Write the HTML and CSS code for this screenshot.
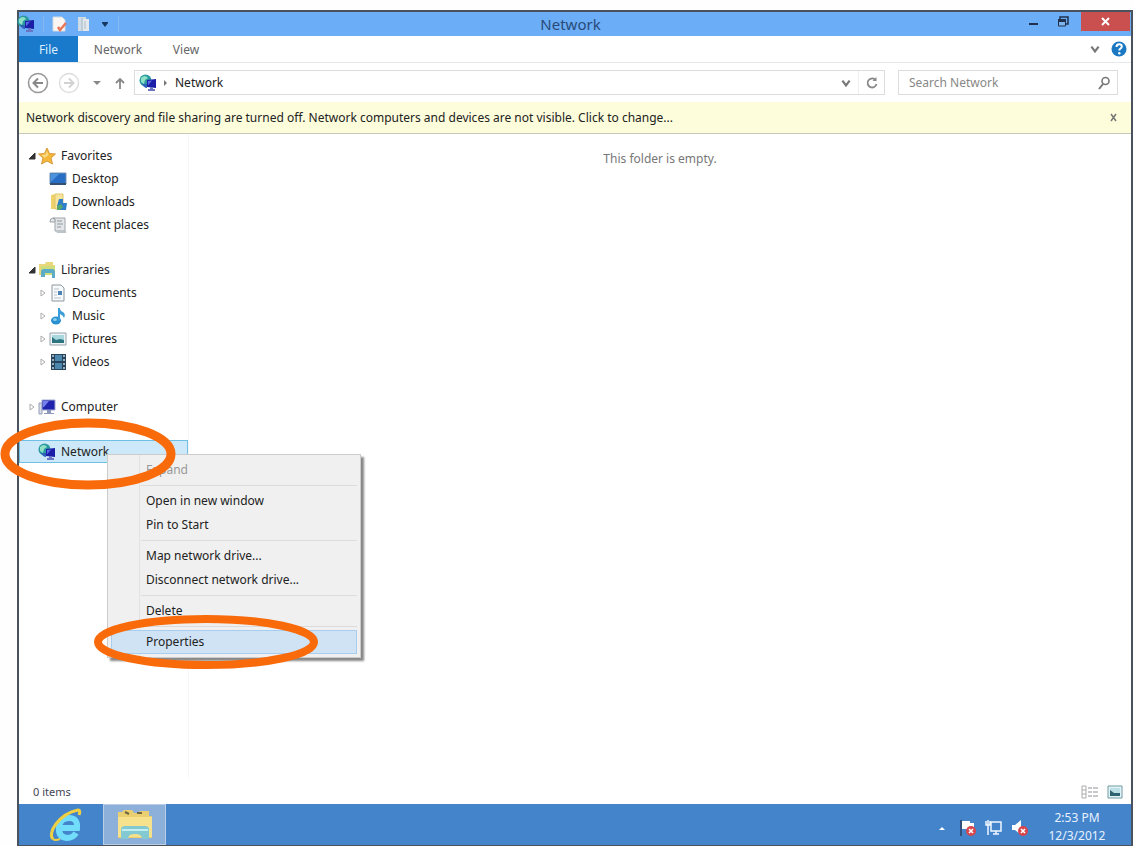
FILE: index.html
```html
<!DOCTYPE html>
<html lang="en">
<head>
<meta charset="utf-8">
<title>Network</title>
<link rel="stylesheet" href="styles.css">
</head>
<body>
<svg class="defs" width="0" height="0" aria-hidden="true">
  <symbol id="net" viewBox="0 0 18 18">
    <circle cx="6.500" cy="6.500" r="6" fill="#2a9aa0"/>
    <path d="M2 4q4-4 7 0l-3 2-1 4-3-2z" fill="#8fe0c4"/>
    <path d="M3 10q2 4 5 4v-4z" fill="#2d64b8"/>
    <path d="M8 6l9-1v9l-9-1z" fill="#1b1fa8"/>
    <path d="M9 7l4-.5-4 5z" fill="#5a68e4"/>
    <path d="M11 13h3v2h2v2H9v-2h2z" fill="#6a76c4"/>
  </symbol>
  <symbol id="open" viewBox="0 0 8 8"><path d="M7 1v6H1z" fill="#333" stroke="#333"/></symbol>
  <symbol id="shut" viewBox="0 0 8 8"><path d="M2 1l4 3-4 3z" fill="#fff" stroke="#aaa"/></symbol>
  <symbol id="chev" viewBox="0 0 10 10"><path d="M2 3l3 4 3-4" fill="none" stroke="#777" stroke-width="1.800"/></symbol>
</svg>

<div class="screen">
  <header class="titlebar">
    <div class="quick">
      <svg width="18" height="18"><use href="#net"/></svg>
      <span class="rule"></span>
      <button aria-label="Properties"><svg width="16" height="18" viewBox="0 0 16 18"><path d="M1 2h9l3 3v11H1z" fill="#fbf6f2" stroke="#d6d9e2"/><path d="M6 12l2 3 6-7" fill="none" stroke="#e8745a" stroke-width="2.500"/></svg></button>
      <button aria-label="New folder"><svg width="16" height="18" viewBox="0 0 16 18"><path d="M2 2h8v14H2z" fill="#cfdbe6"/><path d="M7 4h6v12H7z" fill="#e4e8ea"/><path d="M6 3v13M9 6v8" stroke="#a9bccd"/></svg></button>
      <button aria-label="Customize"><svg width="10" height="10" viewBox="0 0 10 10"><path d="M2 3h6v1l-3 4-3-4z" fill="#17365f"/></svg></button>
      <span class="rule"></span>
    </div>
    <h1>Network</h1>
    <div class="controls">
      <button aria-label="Minimize"><svg width="12" height="12" viewBox="0 0 12 12"><path d="M1 7h9v2H1z" fill="#20304d"/></svg></button>
      <button aria-label="Restore"><svg width="12" height="12" viewBox="0 0 12 12"><path d="M3 3V1h8v7H9" fill="none" stroke="#20304d" stroke-width="1.500"/><path d="M1.500 4h7v6h-7z" fill="#7fb3ee" stroke="#20304d"/><path d="M1 3h8v3H1z" fill="#20304d"/></svg></button>
      <button class="close" aria-label="Close"><svg width="12" height="12" viewBox="0 0 12 12"><path d="M2 2l7 7M9 2L2 9" stroke="#fff" stroke-width="2"/></svg></button>
    </div>
  </header>

  <nav class="tabs">
    <button class="file">File</button>
    <button class="tab-network">Network</button>
    <button class="tab-view">View</button>
    <span class="spacer"></span>
    <button class="icon" aria-label="Expand ribbon"><svg width="12" height="12"><use href="#chev"/></svg></button>
    <button class="icon help" aria-label="Help"><svg width="16" height="16" viewBox="0 0 16 16"><circle cx="8" cy="8" r="7.500" fill="#1b78c2"/><path d="M5.500 6q0-2.700 2.700-2.700 2.600 0 2.600 2.200 0 1.500-1.700 2.300-.8.400-.8 1.700" fill="none" stroke="#fff" stroke-width="2"/><circle cx="8.300" cy="12.200" r="1.200" fill="#fff"/></svg></button>
  </nav>

  <div class="address-row">
    <div class="arrows">
      <button aria-label="Back"><svg width="22" height="22" viewBox="0 0 22 22"><circle cx="11" cy="11" r="9.500" fill="#fff" stroke="#999" stroke-width="1.600"/><path d="M16 11H7M11 6.500L6.500 11l4.500 4.500" fill="none" stroke="#888" stroke-width="2"/></svg></button>
      <button aria-label="Forward"><svg width="22" height="22" viewBox="0 0 22 22"><circle cx="11" cy="11" r="9.500" fill="#fff" stroke="#ddd" stroke-width="1.400"/><path d="M6 11h9M11 6.500l4.500 4.500-4.500 4.500" fill="none" stroke="#d2d2d2" stroke-width="2"/></svg></button>
      <button class="recent" aria-label="Recent locations"><svg width="10" height="10" viewBox="0 0 10 10"><path d="M1 3h8L5 7z" fill="#888"/></svg></button>
      <button aria-label="Up"><svg width="12" height="14" viewBox="0 0 12 14"><path d="M6 13V3M2 7l4-4 4 4" fill="none" stroke="#888" stroke-width="1.800"/></svg></button>
    </div>
    <div class="address">
      <svg width="18" height="18"><use href="#net"/></svg>
      <svg width="6" height="8" viewBox="0 0 6 8"><path d="M1 1l3 3-3 3z" fill="#777"/></svg>
      <a href="#network">Network</a>
      <span class="spacer"></span>
      <button aria-label="Previous locations"><svg width="12" height="12"><use href="#chev"/></svg></button>
      <button class="refresh" aria-label="Refresh"><svg width="14" height="14" viewBox="0 0 14 14"><path d="M10 3.500A4.500 4.500 0 1 0 11.500 8" fill="none" stroke="#888" stroke-width="1.800"/><path d="M7.500 5h4V1z" fill="#888"/></svg></button>
    </div>
    <div class="search">
      <input type="search" placeholder="Search Network" aria-label="Search Network">
      <button aria-label="Search"><svg width="14" height="14" viewBox="0 0 14 14"><circle cx="8.500" cy="5" r="3.500" fill="none" stroke="#777" stroke-width="1.600"/><path d="M6 8l-4 5" stroke="#777" stroke-width="2"/></svg></button>
    </div>
  </div>

  <div class="notice">
    <a href="#change">Network discovery and file sharing are turned off. Network computers and devices are not visible. Click to change...</a>
    <button aria-label="Dismiss"><svg width="10" height="10" viewBox="0 0 10 10"><path d="M2 1l5 7M7 1L2 8" stroke="#777" stroke-width="1.500"/></svg></button>
  </div>

  <main class="panes">
    <nav class="tree">
      <div class="group">
        <a href="#favorites"><svg width="8" height="8"><use href="#open"/></svg><svg width="18" height="18" viewBox="0 0 18 18"><path d="M9 1l2.500 5.500 6 .5-4.500 4 1.500 6L9 14l-5.500 3L5 11 .5 7l6-.5z" fill="#f4b73a" stroke="#d99a3c"/><path d="M9 4l1.500 4-4 3-3-3 4-.5z" fill="#fbd985"/></svg>Favorites</a>
        <a class="child" href="#desktop"><span class="blank"></span><svg width="18" height="18" viewBox="0 0 18 18"><path d="M1 3h16v11H1z" fill="#286dc4" stroke="#7795b5"/><path d="M2 4h8l-7 7H2z" fill="#4c93df"/><path d="M1 13h16v2H1z" fill="#35506f"/></svg>Desktop</a>
        <a class="child" href="#downloads"><span class="blank"></span><svg width="18" height="18" viewBox="0 0 18 18"><path d="M2 2l5-1v15H2z" fill="#f0d26c"/><path d="M6 1h8v15H6z" fill="#f7e49c" stroke="#dfc468"/><path d="M10 6h4v4h4l-1 7H8v-4z" fill="#2d80c9"/><path d="M8 13l4-2 2 3-3 3H8z" fill="#55a76c"/></svg>Downloads</a>
        <a class="child" href="#recent"><span class="blank"></span><svg width="18" height="18" viewBox="0 0 18 18"><path d="M4 2h12v13H6V6H1q0-4 3-4z" fill="#e3e6e8" stroke="#9ea5aa"/><path d="M8 5h5M8 8h6M8 11h4M4 2q3 0 2 4" fill="none" stroke="#8d969c"/><path d="M7 15h10q1 2-1 2H8z" fill="#bcc5ca"/></svg>Recent places</a>
      </div>
      <div class="group">
        <a href="#libraries"><svg width="8" height="8"><use href="#open"/></svg><svg width="18" height="18" viewBox="0 0 18 18"><path d="M1 3h6l1-2h7v3h2v10H1z" fill="#e9d77b"/><path d="M3 5h14v9H3z" fill="#cfdc7b"/><path d="M3 16v-5q0-3 3-3h8q3 0 3 3v6h-3v-5H7v4z" fill="#5cacc7"/></svg>Libraries</a>
        <a class="child" href="#documents"><svg width="8" height="8"><use href="#shut"/></svg><svg width="18" height="18" viewBox="0 0 18 18"><path d="M3 1h9l3 3v13H3z" fill="#f8fafb" stroke="#8b979e"/><path d="M5 5h5M5 8h3M5 11h3M5 14h7" stroke="#b7c3ca"/><path d="M9 7h4v4H9z" fill="#4d83b2"/></svg>Documents</a>
        <a class="child" href="#music"><svg width="8" height="8"><use href="#shut"/></svg><svg width="18" height="18" viewBox="0 0 18 18"><ellipse cx="7" cy="13.500" rx="5" ry="4" fill="#288fd0"/><path d="M9 1h2q0 3 3 4 3 2 1 6-1-3-4-4v7H9z" fill="#3a9dda"/><ellipse cx="6" cy="12.500" rx="2" ry="1.500" fill="#8ccdf0"/></svg>Music</a>
        <a class="child" href="#pictures"><svg width="8" height="8"><use href="#shut"/></svg><svg width="18" height="18" viewBox="0 0 18 18"><path d="M1 3h16v12H1z" fill="#eef4f5" stroke="#95a1a8"/><path d="M3 5h12v8H3z" fill="#a8d8de"/><path d="M3 7l4 3 4-1 4 1v3H3z" fill="#2b7480"/></svg>Pictures</a>
        <a class="child" href="#videos"><svg width="8" height="8"><use href="#shut"/></svg><svg width="18" height="18" viewBox="0 0 18 18"><path d="M2 1h15v16H2z" fill="#27445c"/><path d="M6 2h7v6H6zM6 10h7v6H6z" fill="#4c87ad"/><path d="M4 2v15M15 2v15" stroke="#c4d3dd" stroke-width="1.500" stroke-dasharray="2 2"/></svg>Videos</a>
      </div>
      <div class="group">
        <a href="#computer"><svg width="8" height="8"><use href="#shut"/></svg><svg width="18" height="18" viewBox="0 0 18 18"><path d="M1 5h3v11H1z" fill="#d6dbe6" stroke="#969fb8"/><path d="M4 2h13v10H4z" fill="#1f22ac" stroke="#a0a8d0"/><path d="M5 3h6l-5 6H5z" fill="#7380ee"/><path d="M9 12h4v3h3v1H6v-1h3z" fill="#8d96bd"/></svg>Computer</a>
      </div>
      <div class="group">
        <a class="selected" href="#network"><span class="blank"></span><svg width="18" height="18"><use href="#net"/></svg>Network</a>
      </div>
    </nav>
    <section class="content"><p>This folder is empty.</p></section>
  </main>

  <footer class="status">
    <span>0 items</span>
    <span class="spacer"></span>
    <button aria-label="Details"><svg width="18" height="14" viewBox="0 0 18 14"><path d="M1 1h4v12H1zM1 5h4M1 9h4" fill="#fff" stroke="#aaa"/><path d="M7 3h4M12 3h5M7 7h4M12 7h5M7 11h4M12 11h5" stroke="#8e8e98"/></svg></button>
    <button aria-label="Large icons"><svg width="16" height="14" viewBox="0 0 16 14"><path d="M1 1h14v12H1z" fill="#e3f4f6" stroke="#6e9ba5"/><path d="M3 3h10v8H3z" fill="#bde0e6"/><path d="M3 5l4 3h6v3H3z" fill="#2d6470"/></svg></button>
  </footer>

  <div class="taskbar">
    <button class="ie" aria-label="Internet Explorer"><svg width="34" height="36" viewBox="0 0 34 36"><path d="M27 26q-3 5-9 5-9-1-8-11 1-9 10-9 9 0 8 10H12" fill="none" stroke="#72dcfb" stroke-width="6"/><path d="M4 32C-2 26 10 7 29 3q3 0 1 5" fill="none" stroke="#efd043" stroke-width="3"/><path d="M4 32q2 2 7 0" fill="none" stroke="#efd043" stroke-width="2"/></svg></button>
    <button class="explorer" aria-label="File Explorer"><svg width="36" height="34" viewBox="0 0 36 34"><path d="M1 8V4h4l2-2h8l2 3h4l2-2h9v5h3v22H1z" fill="#e9cf70"/><path d="M1 9h34v20H1z" fill="#f6e18d"/><path d="M8 4l4 2M20 5h5" stroke="#716640" stroke-width="2"/><path d="M4 31V22q0-4 4-4h20q4 0 4 4v9h-7q0-5-7-5t-7 5z" fill="#82c9d2"/><path d="M5 22h26" stroke="#c1eef0" stroke-width="2"/></svg></button>
    <span class="spacer"></span>
    <div class="tray">
      <button aria-label="Show hidden icons"><svg width="10" height="10" viewBox="0 0 10 10"><path d="M2 7l3-3 3 3z" fill="#fff"/></svg></button>
      <button aria-label="Action Center"><svg width="18" height="18" viewBox="0 0 18 18"><path d="M2 1v16" stroke="#283f63" stroke-width="1.500"/><path d="M3 2h8v2h4v8H8v-2H3z" fill="#fff"/><circle cx="12" cy="12" r="5" fill="#d9454c"/><path d="M10 10l4 4M14 10l-4 4" stroke="#fff" stroke-width="1.600"/></svg></button>
      <button aria-label="Network status"><svg width="18" height="18" viewBox="0 0 18 18"><path d="M6 3h10v9H6zM8 15h6M11 12v3M3 1v15M1 2v4h4V2" fill="none" stroke="#eef5ff" stroke-width="1.500"/></svg></button>
      <button aria-label="Volume muted"><svg width="18" height="18" viewBox="0 0 18 18"><path d="M1 6h3l6-5v15l-6-5H1z" fill="#fff"/><circle cx="12" cy="12" r="5" fill="#d9454c"/><path d="M10 10l4 4M14 10l-4 4" stroke="#fff" stroke-width="1.600"/></svg></button>
    </div>
    <time class="clock">2:53 PM<br>12/3/2012</time>
  </div>
</div>

<div class="menu" role="menu">
  <button role="menuitem" disabled>Expand</button>
  <hr>
  <button role="menuitem">Open in new window</button>
  <button role="menuitem">Pin to Start</button>
  <hr>
  <button role="menuitem">Map network drive...</button>
  <button role="menuitem">Disconnect network drive...</button>
  <hr>
  <button role="menuitem">Delete</button>
  <hr>
  <button role="menuitem" class="active">Properties</button>
</div>

<svg class="marks" width="330" height="260" viewBox="0 0 330 260" aria-hidden="true">
  <g fill="none" stroke="#f96a0a">
    <ellipse cx="88" cy="44" rx="83" ry="31" stroke-width="9"/>
    <ellipse cx="206" cy="232" rx="108" ry="23" stroke-width="8"/>
  </g>
</svg>
</body>
</html>
```
FILE: styles.css
```css
* { box-sizing: border-box; }

body {
  position: relative;
  margin: 0;
  height: 100vh;
  padding: 10px 1px 0 17px;
  display: flex;
  background: #fefefe;
  color: #222;
  font: 12px/16px "Noto Sans", "Open Sans", sans-serif;
}

button {
  display: flex;
  align-items: center;
  justify-content: center;
  margin: 0;
  padding: 0;
  border: 0;
  background: none;
  color: inherit;
  font: inherit;
}

a { color: inherit; text-decoration: none; }
svg { display: block; flex: none; }
.defs { position: absolute; }
.spacer { flex: 1; }

.screen {
  flex: 1;
  display: flex;
  flex-direction: column;
  border: 2px solid #4a525e;
  border-bottom-width: 1px;
  background: #fff;
}

.titlebar {
  display: grid;
  grid-template-columns: 1fr auto 1fr;
  height: 24px;
  padding-right: 1px;
  background: #6badf6;
}
.titlebar h1 {
  margin: 0;
  padding-right: 8px;
  color: #294a78;
  font-size: 15px;
  font-weight: 400;
  line-height: 24px;
}
.quick { display: flex; align-items: center; gap: 8px; }
.quick > svg { margin-left: -2px; }
.rule { width: 1px; height: 16px; background: #86b9f2; }
.controls { display: flex; justify-content: flex-end; }
.controls button { width: 29px; height: 19px; }
.controls .close { width: 49px; margin-left: 4px; background: #c9504f; }

.tabs {
  display: flex;
  height: 27px;
  padding-right: 2px;
  border-bottom: 1px solid #e6e7e9;
  color: #666;
}
.tabs button { padding-top: 2px; }
.tabs .file { width: 59px; background: #1979ca; color: #dcefff; }
.tab-network { width: 80px; }
.tab-view { width: 56px; }
.tabs .icon { width: 24px; padding-top: 0; }
.tabs .help { width: 20px; margin-left: 2px; }

.address-row { display: flex; gap: 13px; padding: 7px 13px 7px 8px; }
.arrows { display: flex; align-items: center; gap: 9px; width: 107px; }
.arrows .recent { width: 16px; }
.address, .search {
  display: flex;
  align-items: center;
  height: 25px;
  border: 1px solid #ddd;
}
.address { flex: 1; gap: 6px; margin-left: -13px; padding-left: 4px; }
.address .refresh { width: 26px; height: 23px; border-left: 1px solid #eee; }
.search { width: 220px; padding: 0 6px 0 10px; }
.search input {
  flex: 1;
  min-width: 0;
  padding: 0;
  border: 0;
  outline: 0;
  background: none;
  font: inherit;
}
.search input::placeholder { color: #888; opacity: 1; }

.notice {
  display: flex;
  align-items: center;
  justify-content: space-between;
  height: 32px;
  padding: 0 12px 0 7px;
  border-bottom: 1px solid #c8c8bb;
  background: #fdfddc;
}

.panes { flex: 1; display: flex; min-height: 0; }
.tree {
  display: flex;
  flex-direction: column;
  gap: 22px;
  width: 170px;
  padding-top: 10px;
  border-right: 1px solid #f6f6f6;
}
.tree a {
  display: flex;
  align-items: center;
  height: 23px;
  gap: 5px;
  padding-left: 8px;
  border: 1px solid transparent;
}
.tree a svg:first-child { margin-right: -3px; }
.blank { width: 8px; margin-right: -3px; }
.tree .child { padding-left: 19px; gap: 5px; }
.tree .selected { border-color: #70bfe5; background: #cde8f8; }

.content { flex: 1; padding: 17px 0; color: #777; text-align: center; }
.content p { margin: 0; }

.status {
  display: flex;
  align-items: center;
  gap: 8px;
  height: 25px;
  padding: 0 8px 0 14px;
  color: #445;
  font-size: 11px;
}

.taskbar {
  display: flex;
  height: 41px;
  background: #4484cb;
  color: #e8f2ff;
}
.ie { width: 84px; padding-left: 10px; }
.explorer { width: 63px; border: 1px solid #b9cfe6; background: #8db0da; }
.tray { display: flex; align-items: center; gap: 8px; padding-top: 6px; }
.tray button:first-child { width: 18px; }
.clock { width: 102px; padding: 5px 6px 0 0; font-size: 12px; line-height: 18px; text-align: center; }

.menu {
  position: absolute;
  left: 107px;
  top: 454px;
  width: 254px;
  padding: 3px;
  border: 1px solid #ccc;
  background: linear-gradient(90deg, #f0f0f0 31px, #e2e2e2 31px, #e2e2e2 32px, #f0f0f0 32px);
  box-shadow: 3px 3px 2px #888;
}
.menu button {
  justify-content: flex-start;
  width: 100%;
  height: 24px;
  padding-left: 34px;
  border: 1px solid transparent;
}
.menu button:disabled { color: #999; }
.menu .active { border-color: #a9cdee; background: #d0e3f5; }
.menu hr { height: 1px; margin: 3px 0 3px 30px; border: 0; background: #dcdcdc; }

.marks { position: absolute; left: 0; top: 410px; pointer-events: none; }
```
